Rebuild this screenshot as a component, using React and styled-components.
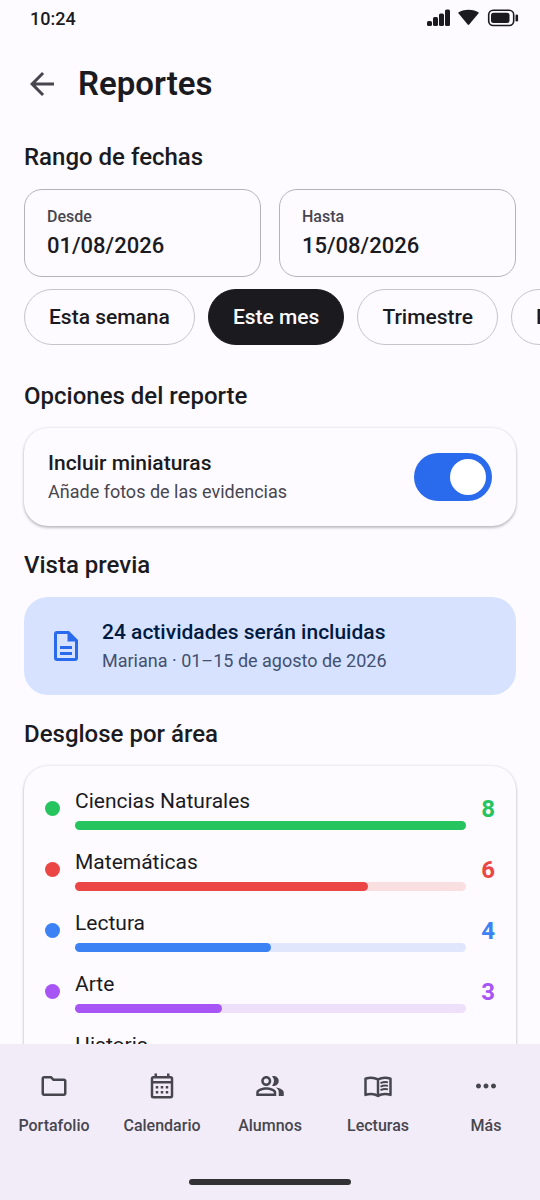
import React, { useState } from 'react'
import styled, { createGlobalStyle } from 'styled-components'
import {
    MdArrowBack,
    MdMoreHoriz,
    MdOutlineCalendarMonth,
    MdOutlineFolder,
    MdOutlinePeopleAlt,
} from 'react-icons/md'

const GlobalStyle = createGlobalStyle`
    * {
        box-sizing: border-box;
    }
    body {
        margin: 0;
        background: #fdfbff;
        color: #1b1b1f;
        font-family: Roboto, "Liberation Sans", sans-serif;
    }
    button, input {
        font: inherit;
        color: inherit;
    }
    h1, h2, p, ul {
        margin: 0;
        padding: 0;
    }
`
const Screen = styled.div`
    height: 100vh;
    display: flex;
    flex-direction: column;
    overflow: hidden;
`
const StatusBar = styled.div`
    height: 36px;
    padding: 0 21px 0 30px;
    display: flex;
    flex-shrink: 0;
    align-items: center;
    justify-content: space-between;
    font-size: 18px;
    font-weight: 500;
`
const StatusIcons = styled.svg`
    width: 92px;
    height: 18px;
`
const Header = styled.header`
    height: 96px;
    padding: 0 24px;
    display: flex;
    flex-shrink: 0;
    align-items: center;
    gap: 18px;
`
const BackButton = styled.button`
    display: flex;
    padding: 0;
    border: none;
    background: none;
    color: #47464f;
    font-size: 36px;
    cursor: pointer;
`
const Title = styled.h1`
    font-size: 33px;
    line-height: 40px;
    font-weight: 600;
`
const Body = styled.main`
    flex: 1;
    min-height: 0;
    padding: 10px 24px 0;
    display: flex;
    flex-direction: column;
    gap: 24px;
    overflow-y: auto;
    scrollbar-width: none;
`
const Section = styled.section`
    flex-shrink: 0;
`
const SectionTitle = styled.h2`
    margin-bottom: 17px;
    font-size: 24px;
    line-height: 30px;
    font-weight: 500;
`
const Fields = styled.div`
    display: grid;
    grid-template-columns: 1fr 1fr;
    gap: 18px;
`
const Field = styled.label`
    height: 88px;
    padding: 0 22px;
    display: flex;
    flex-direction: column;
    justify-content: center;
    border: 1px solid #b5b3b9;
    border-radius: 18px;
`
const FieldLabel = styled.span`
    color: #47464f;
    font-size: 16px;
    line-height: 24px;
    font-weight: 500;
`
const FieldInput = styled.input`
    width: 100%;
    height: 32px;
    padding: 0;
    border: none;
    outline: none;
    background: none;
    font-size: 22px;
    font-weight: 500;
`
const Chips = styled.div`
    margin: 12px -24px 12px 0;
    display: flex;
    gap: 13px;
    overflow-x: auto;
    scrollbar-width: none;
`
const Chip = styled.button`
    height: 56px;
    padding: 0 24px;
    flex-shrink: 0;
    border: 1px solid ${({ $active }) => ($active ? '#1b1b1f' : '#c6c4ca')};
    border-radius: 28px;
    background: ${({ $active }) => ($active ? '#1b1b1f' : 'transparent')};
    color: ${({ $active }) => ($active ? '#fdfbff' : '#1b1b1f')};
    font-size: 21px;
    font-weight: 500;
    cursor: pointer;
`
const Card = styled.div`
    border-radius: 24px;
    background: #fdfbff;
    box-shadow: 0 2px 3px rgba(0, 0, 0, 0.22), 0 0 3px rgba(0, 0, 0, 0.14);
`
const OptionCard = styled(Card).attrs({ as: 'label' })`
    height: 98px;
    padding: 0 24px;
    display: flex;
    align-items: center;
    justify-content: space-between;
    cursor: pointer;
`
const PreviewCard = styled.div`
    height: 98px;
    padding: 0 24px;
    display: flex;
    align-items: center;
    gap: 18px;
    border-radius: 24px;
    background: #d6e2ff;
    color: #001a41;
`
const CardTitle = styled.p`
    font-size: 21px;
    line-height: 30px;
    font-weight: 500;
`
const CardText = styled.p`
    color: ${({ $color }) => $color || '#47464f'};
    font-size: 18px;
    line-height: 28px;
`
const Switch = styled.input`
    width: 78px;
    height: 48px;
    margin: 0;
    padding: 6px;
    display: flex;
    flex-shrink: 0;
    justify-content: ${({ checked }) => (checked ? 'flex-end' : 'flex-start')};
    appearance: none;
    border-radius: 24px;
    background: ${({ checked }) => (checked ? '#2a6bed' : '#c8c6cc')};
    cursor: pointer;

    &::before {
        content: '';
        width: 36px;
        height: 36px;
        border-radius: 50%;
        background: #fff;
    }
`
const AreaCard = styled(Card).attrs({ as: 'ul' })`
    padding: 21px;
    display: flex;
    flex-direction: column;
    gap: 18px;
    list-style: none;
`
const AreaRow = styled.li`
    display: flex;
    align-items: center;
    gap: 15px;
`
const Dot = styled.span`
    width: 15px;
    height: 15px;
    border-radius: 50%;
    background: ${({ $color }) => $color};
`
const AreaInfo = styled.div`
    flex: 1;
`
const AreaName = styled.p`
    margin-bottom: 6px;
    font-size: 21px;
    line-height: 28px;
`
const Track = styled.div`
    height: 9px;
    border-radius: 5px;
    background: ${({ $color }) => $color};
`
const Fill = styled.div`
    height: 100%;
    border-radius: 5px;
    background: ${({ $color }) => $color};
`
const Count = styled.span`
    min-width: 14px;
    color: ${({ $color }) => $color};
    font-size: 24px;
    line-height: 28px;
    font-weight: 700;
    text-align: right;
`
const BottomBar = styled.footer`
    flex-shrink: 0;
    padding: 27px 0 15px;
    display: flex;
    flex-direction: column;
    align-items: center;
    gap: 41px;
    background: #f2ecf8;
`
const Nav = styled.nav`
    width: 100%;
    display: grid;
    grid-template-columns: repeat(5, 1fr);
`
const NavLink = styled.a`
    display: flex;
    flex-direction: column;
    align-items: center;
    gap: 13px;
    color: #47464f;
    font-size: 16px;
    line-height: 24px;
    font-weight: 500;
    text-decoration: none;

    svg {
        width: 30px;
        height: 30px;
    }
`
const HomeIndicator = styled.div`
    width: 30%;
    height: 6px;
    border-radius: 3px;
    background: #323136;
`

const DocumentIcon = () => (
    <svg width="36" height="36" viewBox="0 0 24 24" fill="none" stroke="#2a6bed" strokeWidth="2" aria-hidden="true">
        <path d="M14 3H6a1 1 0 0 0-1 1v16a1 1 0 0 0 1 1h12a1 1 0 0 0 1-1V8.400" strokeLinejoin="round" />
        <path d="M14 2l6 6v1h-7V2z" fill="#2a6bed" stroke="none" />
        <path d="M8 13h8M8 17h8" />
    </svg>
)

const BookIcon = () => (
    <svg viewBox="0 0 24 24" fill="none" stroke="currentColor" strokeWidth="2" strokeLinejoin="round" aria-hidden="true">
        <path d="M12 6.700C10.300 5.800 8.500 5.300 6.500 5.300c-1.600 0-3.100.3-4.500.9v12.900c1.400-.5 2.900-.7 4.500-.7 2 0 3.900.5 5.500 1.500 1.600-1 3.500-1.500 5.500-1.500 1.600 0 3.100.2 4.500.7V6.200c-1.400-.6-2.900-.9-4.500-.9-2 0-3.800.5-5.500 1.400zM12 6.700v13.200" />
        <path d="M14 9.700c1.900-.8 4-1 6-.6M14 12.500c1.900-.8 4-1 6-.6M14 15.300c1.900-.8 4-1 6-.6" strokeWidth="1.600" />
    </svg>
)

const ranges = ['Esta semana', 'Este mes', 'Trimestre', 'Personalizado']

const areas = [
    { name: 'Ciencias Naturales', count: 8, color: '#25c45f', track: '#d5f5e0' },
    { name: 'Matemáticas', count: 6, color: '#ec4545', track: '#fadfe1' },
    { name: 'Lectura', count: 4, color: '#3c82f4', track: '#e0e7fd' },
    { name: 'Arte', count: 3, color: '#a755f5', track: '#eee0fb' },
    { name: 'Historia', count: 2, color: '#f59e0b', track: '#fdeed3' },
]
const maxCount = 8

const navItems = [
    { label: 'Portafolio', icon: MdOutlineFolder },
    { label: 'Calendario', icon: MdOutlineCalendarMonth },
    { label: 'Alumnos', icon: MdOutlinePeopleAlt },
    { label: 'Lecturas', icon: BookIcon },
    { label: 'Más', icon: MdMoreHoriz },
]

const App = () => {
    const [from, setFrom] = useState('01/08/2026')
    const [to, setTo] = useState('15/08/2026')
    const [range, setRange] = useState('Este mes')
    const [thumbnails, setThumbnails] = useState(true)

    return (
        <Screen>
            <GlobalStyle />
            <StatusBar>
                <span>10:24</span>
                <StatusIcons viewBox="0 0 92 18" fill="#1b1b1f" aria-hidden="true">
                    <rect x="0" y="12" width="5" height="5" rx="1.500" />
                    <rect x="6" y="8" width="5" height="9" rx="1.500" />
                    <rect x="12" y="4.500" width="5" height="12.500" rx="1.500" />
                    <rect x="18" y="0.500" width="5" height="16.500" rx="1.500" />
                    <path d="M31 3.700C36 -0.400 47 -0.400 52 3.700L42.200 15.500a1 1 0 0 1-1.500 0z" />
                    <rect x="61.700" y="1.200" width="25" height="15.300" rx="4.500" fill="none" stroke="#1b1b1f" strokeWidth="1.600" />
                    <rect x="64" y="3.700" width="18.500" height="10.300" rx="2.500" />
                    <rect x="88.500" y="5.500" width="2.600" height="7" rx="1.200" />
                </StatusIcons>
            </StatusBar>

            <Header>
                <BackButton type="button" aria-label="Volver">
                    <MdArrowBack />
                </BackButton>
                <Title>Reportes</Title>
            </Header>

            <Body>
                <Section>
                    <SectionTitle>Rango de fechas</SectionTitle>
                    <Fields>
                        <Field htmlFor="from">
                            <FieldLabel>Desde</FieldLabel>
                            <FieldInput id="from" type="text" value={from} onChange={(e) => setFrom(e.target.value)} />
                        </Field>
                        <Field htmlFor="to">
                            <FieldLabel>Hasta</FieldLabel>
                            <FieldInput id="to" type="text" value={to} onChange={(e) => setTo(e.target.value)} />
                        </Field>
                    </Fields>
                    <Chips>
                        {ranges.map((item) => (
                            <Chip key={item} type="button" $active={item === range} onClick={() => setRange(item)}>
                                {item}
                            </Chip>
                        ))}
                    </Chips>
                </Section>

                <Section>
                    <SectionTitle>Opciones del reporte</SectionTitle>
                    <OptionCard htmlFor="thumbnails">
                        <div>
                            <CardTitle>Incluir miniaturas</CardTitle>
                            <CardText>Añade fotos de las evidencias</CardText>
                        </div>
                        <Switch
                            id="thumbnails"
                            type="checkbox"
                            role="switch"
                            checked={thumbnails}
                            onChange={(e) => setThumbnails(e.target.checked)}
                        />
                    </OptionCard>
                </Section>

                <Section>
                    <SectionTitle>Vista previa</SectionTitle>
                    <PreviewCard>
                        <DocumentIcon />
                        <div>
                            <CardTitle>24 actividades serán incluidas</CardTitle>
                            <CardText $color="#435070">Mariana · 01–15 de agosto de 2026</CardText>
                        </div>
                    </PreviewCard>
                </Section>

                <Section>
                    <SectionTitle>Desglose por área</SectionTitle>
                    <AreaCard>
                        {areas.map(({ name, count, color, track }) => (
                            <AreaRow key={name}>
                                <Dot $color={color} />
                                <AreaInfo>
                                    <AreaName>{name}</AreaName>
                                    <Track $color={track}>
                                        <Fill $color={color} style={{ width: `${(count / maxCount) * 100}%` }} />
                                    </Track>
                                </AreaInfo>
                                <Count $color={color}>{count}</Count>
                            </AreaRow>
                        ))}
                    </AreaCard>
                </Section>
            </Body>

            <BottomBar>
                <Nav>
                    {navItems.map(({ label, icon: Icon }) => (
                        <NavLink key={label} href="#">
                            <Icon />
                            {label}
                        </NavLink>
                    ))}
                </Nav>
                <HomeIndicator />
            </BottomBar>
        </Screen>
    )
}

export default App
